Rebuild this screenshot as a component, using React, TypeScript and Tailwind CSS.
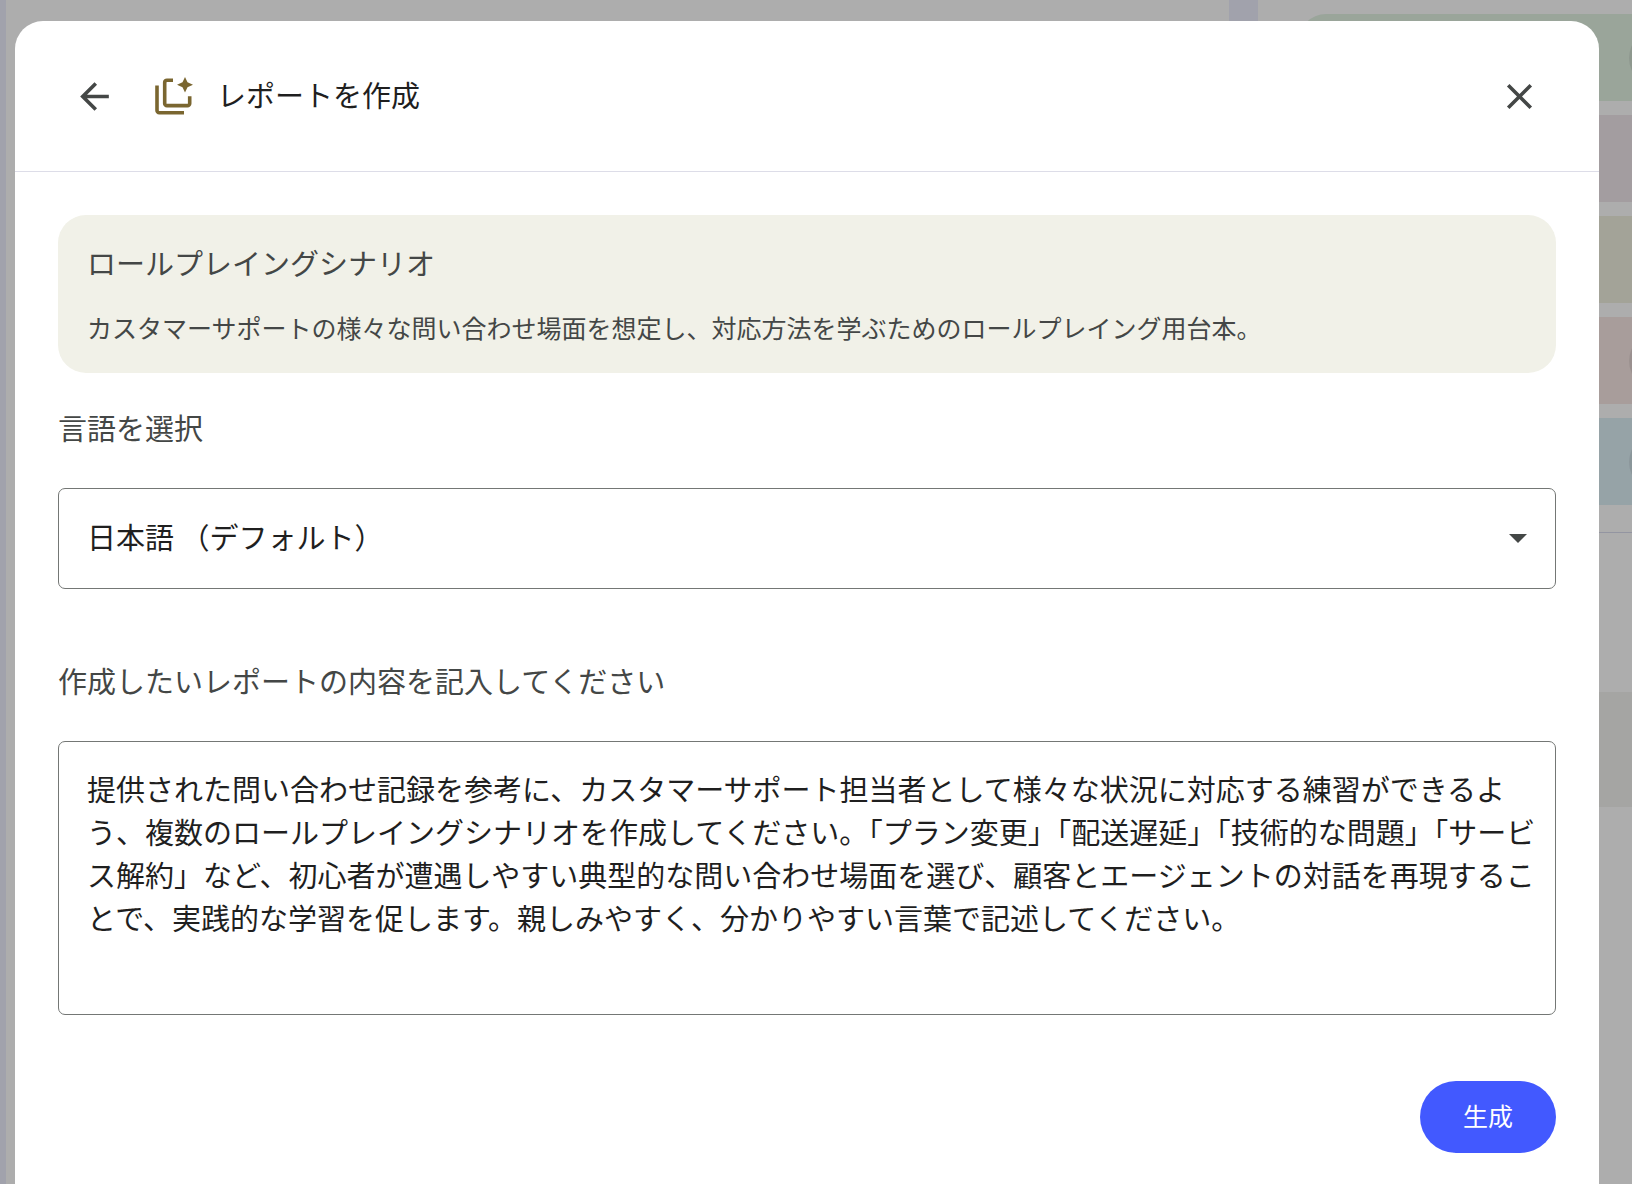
import React, { useState } from "react";
import { MdArrowBack, MdClose } from "react-icons/md";

const DEFAULT_PROMPT =
  "提供された問い合わせ記録を参考に、カスタマーサポート担当者として様々な状況に対応する練習ができるよう、複数のロールプレイングシナリオを作成してください。「プラン変更」「配送遅延」「技術的な問題」「サービス解約」など、初心者が遭遇しやすい典型的な問い合わせ場面を選び、顧客とエージェントの対話を再現することで、実践的な学習を促します。親しみやすく、分かりやすい言葉で記述してください。";

const cards = [
  { color: "bg-[#e3f3e4]", dot: true },
  { color: "bg-[#f0e7ec]", dot: false },
  { color: "bg-[#f0f0e1]", dot: false },
  { color: "bg-[#f8e8e5]", dot: true },
  { color: "bg-[#def0f7]", dot: true },
];

const ReportIcon: React.FC = () => (
  <svg className="size-[38px] shrink-0" viewBox="0 0 38 38" fill="none" aria-hidden="true">
    <path
      d="M2 8.5V33.5a2.2 2.2 0 0 0 2.2 2.2H29"
      stroke="#7a6630"
      strokeWidth="3.6"
    />
    <path
      d="M18 3.2H11.9a2.2 2.2 0 0 0-2.2 2.2V26.4a2.2 2.2 0 0 0 2.2 2.2H32.5a2.2 2.2 0 0 0 2.2-2.2V19.3"
      stroke="#7a6630"
      strokeWidth="3.6"
    />
    <path
      d="M30 0L32.5 5.2L38 7.7L32.5 10.2L30 15.4L27.5 10.2L22 7.7L27.5 5.2Z"
      fill="#7a6630"
    />
  </svg>
);

// The page that lies behind the dialog
const Studio: React.FC = () => (
  <div className="absolute inset-0 flex overflow-hidden bg-[#eeeffe]" aria-hidden="true">
    <div className="ml-[6px] flex-1 bg-white" />
    <div className="ml-[29px] w-[374px] bg-white pt-[14px]">
      <div className="ml-10 flex flex-col gap-[14px]">
        {cards.map((card) => (
          <div
            key={card.color}
            className={`flex h-[87px] items-center justify-end rounded-l-[28px] ${card.color}`}
          >
            {card.dot && <div className="-mr-[55px] size-[58px] shrink-0 rounded-full bg-black/8" />}
          </div>
        ))}
      </div>
      <div className="mt-[27px] h-px bg-[#d9dcee]" />
      <div className="mt-[159px] h-[115px] bg-[#f4f4f0]" />
    </div>
  </div>
);

export default function App() {
  const [language, setLanguage] = useState("ja");
  const [prompt, setPrompt] = useState(DEFAULT_PROMPT);

  return (
    <div className="relative min-h-screen overflow-hidden font-['Noto_Sans_CJK_JP',sans-serif] text-[29px] leading-[43px] text-[#1f1f1f]">
      <Studio />
      <div className="absolute inset-0 bg-black/32" />

      <div className="relative flex min-h-screen flex-col pt-[21px] pr-[33px] pl-[15px]">
        <div
          role="dialog"
          aria-labelledby="dialog-title"
          className="flex-1 rounded-t-[28px] bg-white pb-[31px]"
        >
          <header className="flex h-[151px] items-center border-b border-[#dddde8] px-[58px]">
            <button type="button" aria-label="戻る" className="mr-[39px] text-[#444746]">
              <MdArrowBack className="size-[43px]" />
            </button>
            <ReportIcon />
            <h1 id="dialog-title" className="ml-6 pb-1">
              レポートを作成
            </h1>
            <button type="button" aria-label="閉じる" className="ml-auto text-[#444746]">
              <MdClose className="size-[43px]" />
            </button>
          </header>

          <form className="flex flex-col px-[43px] pt-[43px]" onSubmit={(e) => e.preventDefault()}>
            <section className="rounded-[28px] bg-[#f1f1e8] px-[29px] pt-[26px] pb-[28px] text-[#444746]">
              <h2>ロールプレイングシナリオ</h2>
              <p className="mt-[25px] text-[25px] leading-[36px]">
                カスタマーサポートの様々な問い合わせ場面を想定し、対応方法を学ぶためのロールプレイング用台本。
              </p>
            </section>

            <label htmlFor="language" className="mt-[33px] text-[#444746]">
              言語を選択
            </label>
            <div className="relative mt-[39px]">
              <select
                id="language"
                value={language}
                onChange={(e) => setLanguage(e.target.value)}
                className="block h-[101px] w-full appearance-none rounded-[7px] border border-[#747775] bg-white px-[28px] pb-1"
              >
                <option value="ja">日本語 （デフォルト）</option>
              </select>
              <svg
                className="pointer-events-none absolute top-[46px] right-[29px] h-[9px] w-[18px]"
                viewBox="0 0 18 9"
                aria-hidden="true"
              >
                <path d="M0 0H18L9 9Z" fill="#444746" />
              </svg>
            </div>

            <label htmlFor="prompt" className="mt-[70px] text-[#444746]">
              作成したいレポートの内容を記入してください
            </label>
            <textarea
              id="prompt"
              value={prompt}
              onChange={(e) => setPrompt(e.target.value)}
              className="mt-[39px] block h-[274px] w-full resize-none rounded-[7px] border border-[#747775] bg-white pt-[25px] pr-[16px] pb-[28px] pl-[28px]"
            />

            <button
              type="submit"
              className="mt-[66px] h-[72px] self-end rounded-full bg-[#4259ff] px-[43px] pb-1 text-[25px] text-white"
            >
              生成
            </button>
          </form>
        </div>
      </div>
    </div>
  );
}
